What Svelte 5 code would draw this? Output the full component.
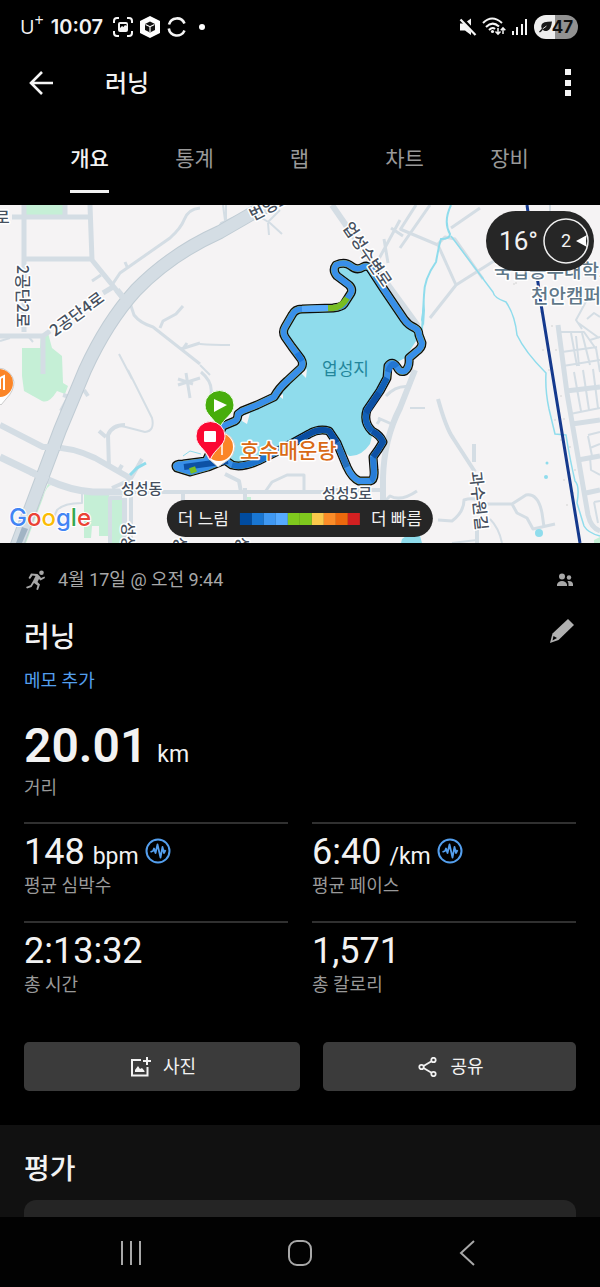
<script>
  const tabs = ['개요', '통계', '랩', '차트', '장비'];
  let active = $state('개요');

  const stats = [
    { value: '148', unit: 'bpm', label: '평균 심박수', chart: true },
    { value: '6:40', unit: '/km', label: '평균 페이스', chart: true },
    { value: '2:13:32', label: '총 시간' },
    { value: '1,571', label: '총 칼로리' }
  ];

  const scale = ['#004b9f', '#1976d2', '#3f98f2', '#55aaff', '#7fc91e', '#7fc91e', '#fbc94b', '#fb8c28', '#ed690d', '#d32021'];

  const route =
    'M177 468 C174 465 178 464 183 464 L206 461 L223 426 L235 421 Q238 419 238 414 L242 411 L257 405 L274 397 Q279 388 287 381 L301 368 Q304 364 301 359 L292 347 L285 337 Q282 332 285 327 L292 315 Q295 309 302 309 L333 308 Q342 307 344 304 L351 293 Q353 289 349 285 L337 276 Q332 270 336 265 Q345 261 351 266 Q357 271 363 267 Q367 265 370 268 L383 288 L404 319 Q408 325 415 328 Q419 330 419 335 L422 343 Q422 348 416 352 L409 358 Q410 367 405 371 Q400 373 397 367 Q392 360 388 366 L387 378 L380 391 L367 410 Q363 422 372 431 Q380 435 383 442 Q379 449 373 457 L374 470 Q375 480 370 481 L359 481 Q352 478 347 467 L337 443 L329 431 Q319 428 309 434 L280 450 L258 461 Q242 468 232 465 L225 460 L208 467 L190 472 Z';

  const segments = [
    { color: '#0d51a5', d: 'M184 467 L206 464 L228 461' },
    { color: '#1b72cd', d: 'M232 465 Q242 468 258 461 L280 450' },
    { color: '#0a4ea2', d: 'M280 450 L309 434 Q319 428 329 431 L337 443' },
    { color: '#246fbe', d: 'M337 443 L347 467' },
    { color: '#277cd6', d: 'M371 481 Q375 478 373 457' },
    { color: '#0d51a5', d: 'M373 457 Q379 449 383 442 Q380 435 372 431' },
    { color: '#1260b7', d: 'M372 431 Q363 422 367 410 L380 391 L387 378' },
    { color: '#0d51a5', d: 'M366 413 L379 393' },
    { color: '#2276d1', d: 'M388 372 Q392 360 397 367' },
    { color: '#1d78dc', d: 'M297 353 L302 361' },
    { color: '#78bd22', d: 'M328 308 L333 308 Q342 307 347 298' },
    { color: '#58aafb', d: 'M302 309 L328 308' },
    { color: '#78bd22', d: 'M190 471 L196 469' }
  ];

  // Minor streets, grouped by stroke width
  const streets = [
    { w: 5, d: 'M24 205 V332 M90 205 L92 260 L122 297 M12 217 H90 M24 259 H92 M65 205 V215 M43 337 V374 M0 336 H43 L50 331 M103 293 L113 287' },
    { w: 3, d: 'M112 285 L120 273 L170 238 Q181 228 184 220 Q188 209 200 208 M130 303 L134 315 Q140 323 153 327 L200 364 M160 328 L163 321 L176 314 L183 306 M182 350 L187 343 M181 349 L200 343 M128 269 L125 262 M92 281 L101 275' },
    { w: 2, d: 'M119 354 L132 379 M109 325 L116 323 M28 336 L33 342 M0 341 L10 338 M128 370 L152 418 Q155 431 145 432 L118 425 M200 344 Q212 345 230 345 M200 365 L210 375' },
    { w: 6, d: 'M0 425 L43 447 Q71 446 95 458 L130 478' },
    { w: 7, d: 'M0 457 L48 480 Q72 491 93 492 L125 492' },
    { w: 4, d: 'M109 468 L108 435 Q112 425 125 425 M118 472 L122 465 M99 431 L106 437 M112 488 L130 480 L142 459 M78 380 L61 411 M125 498 V543 M110 543 V498 H122 M63 395 L73 398 L81 383 M84 390 L88 396' },
    { w: 2, d: 'M82 491 V503 Q64 503 57 510 L52 522 M109 498 L110 540 M123 498 V540' },
    { w: 4, d: 'M125 492 H340 M131 480 V543 M183 492 V506 M245 488 V504 M225 474 L239 481 L241 492 M335 490 H383' },
    { w: 3, d: 'M178 379 L193 384 M186 373 L190 398 M178 385 L200 378 M201 372 Q213 382 211 394 M265 492 L272 482 L287 475 H304 V492 M235 470 L232 450' },
    { w: 6, d: 'M332 205 L370 260 L418 326 M415 370 L400 408 Q384 439 383 478 V503' },
    { w: 3, d: 'M378 418 L394 425 M386 396 Q397 384 411 387 M377 424 L381 418 M346 503 V531 L380 531 M383 503 L390 496 Q401 502 417 491' },
    { w: 3, d: 'M400 248 L430 205 M400 230 L416 205 M400 229 L438 245 L456 285 L430 318 M438 244 L445 237 L455 239 L483 279 M456 285 L497 259 M451 228 L480 208 M375 266 L400 220 M388 263 L384 239 M391 228 L403 236' },
    { w: 2, d: 'M226 228 L223 205 M250 211 L270 223 L282 234 M268 223 L269 235 M268 222 L280 210 M215 236 L221 223 L251 210 M226 220 L226 205 M210 232 L218 240' },
    { w: 4, d: 'M438 399 Q446 428 453 438 L475 472 M474 444 V462 M477 530 V543' },
    { w: 3, d: 'M438 520 L452 521 Q464 512 464 500 Q475 496 484 504 H512 L526 495 Q538 493 542 513 L544 527 M512 504 L517 513 L527 518 L533 529 L555 524' },
    { w: 2, d: 'M490 519 Q499 528 502 543 M550 205 V226 M410 408 L425 408 M452 543 L477 540' },
    { w: 5, d: 'M558 325 L567 393 L588 515 Q591 528 600 531 M572 424 L600 420 M566 391 L600 387 M578 460 L600 456 M586 493 L600 490' },
    { w: 2, d: 'M559 332 H584 L596 349 M562 352 L597 347 M563 366 L600 360 M571 333 L577 366 M582 333 L590 365 M596 348 L600 372 M576 336 L579 366 M570 414 L600 408 M574 372 L581 411 M583 370 L589 410 M593 369 L598 408 M588 435 L600 432 M588 436 L592 456 M590 448 L600 444 M590 457 L591 470 L600 475 M594 502 L600 501 M594 502 L598 523' },
    { w: 2, d: 'M582 329 L576 320 L582 309 L589 296 M577 322 L599 338 M587 319 L594 313 L600 317 M590 340 L600 337' }
  ];

  const dots = [
    [541, 312], [552, 326], [543, 350], [556, 350], [552, 368], [561, 396], [549, 370],
    [564, 419], [555, 420], [561, 440], [570, 447], [564, 480], [575, 470], [573, 493], [567, 505], [514, 284], [516, 283]
  ];
</script>

{#snippet pulse()}
  <svg class="pulse" viewBox="0 0 26 26" fill="none" stroke="#549fee" aria-hidden="true">
    <circle cx="13" cy="13" r="11.5" stroke-width="2" />
    <path d="M5.500 14 L8 13 L9 10.500 L10.500 15 L12.500 6.500 L15.500 19.500 L17.500 9 L19 15 L20.500 12" stroke-width="1.8" stroke-linejoin="round" />
  </svg>
{/snippet}

<div class="screen">
  <div class="status">
    <div class="status-side">
      <span class="carrier">U<sup>+</sup></span>
      <span class="clock">10:07</span>
      <svg class="s20" viewBox="0 0 20 20" fill="none" stroke="#f5f5f5" stroke-width="2" aria-hidden="true">
        <path d="M1 6 V4 Q1 1 4 1 H6 M14 1 H16 Q19 1 19 4 V6 M19 14 V16 Q19 19 16 19 H14 M6 19 H4 Q1 19 1 16 V14" />
        <path fill="#f5f5f5" stroke="none" fill-rule="evenodd" d="M7 5 H13 Q15 5 15 7 V13 Q15 15 13 15 H7 Q5 15 5 13 V7 Q5 5 7 5 Z M7 11 L9 9 L10.500 10 L12 8 L13.500 9 V7 H7 Z" />
      </svg>
      <svg class="cube" viewBox="0 0 20 22" aria-hidden="true">
        <path fill="#fff" d="M10 0 L20 5 V17 L10 22 L0 17 V5 Z" />
        <path d="M5 8 L10 5.500 L15 8 V14 L10 16.500 L5 14 Z" fill="#111" />
        <path d="M5.500 8.500 L10 10.700 L14.500 8.500 M10 10.500 V16" fill="none" stroke="#fff" stroke-width="1.2" />
      </svg>
      <svg class="s20" viewBox="0 0 20 20" fill="none" stroke="#f5f5f5" stroke-width="2.6" aria-hidden="true">
        <path d="M2 7.500 A8.200 8.200 0 0 1 17.500 6.500 M1.800 11.500 A8.200 8.200 0 0 0 17.500 13.500" />
      </svg>
      <span class="dot"></span>
    </div>
    <div class="status-side right">
      <svg class="s18" viewBox="0 0 18 18" aria-hidden="true">
        <path fill="#f5f5f5" d="M1 5.500 H5 L12 .5 V17 L6 12.500 H1 Z" />
        <path d="M1 -1 L18 17" stroke="#000" stroke-width="4" />
        <path d="M1.500 1.500 L16.500 17" stroke="#f5f5f5" stroke-width="2.200" />
      </svg>
      <svg class="wifi" viewBox="0 0 24 20" fill="none" stroke="#f5f5f5" stroke-width="2" aria-hidden="true">
        <path d="M1 6 Q10 -3 20 6 M4 10 Q10.500 3.500 17 9.500 M7 13 Q10.500 9.500 13 12" />
        <circle cx="10.500" cy="14.500" r="1.600" fill="#f5f5f5" stroke="none" />
        <path d="M16 11 V17 M13.500 14.500 L16 17.200 L18.500 14.500 M21 17 V11 M18.800 13.300 L21 10.800 L23.300 13.300" stroke-width="1.500" />
      </svg>
      <svg class="s18" viewBox="0 0 18 18" fill="#f5f5f5" aria-hidden="true">
        <path d="M1 13 h2 v4 h-2 z M5 9 h2 v8 h-2 z M10 6 h2 v11 h-2 z M14 1 h2 v16 h-2 z" />
      </svg>
      <span class="battery">
        <svg viewBox="0 0 14 12" aria-hidden="true">
          <path d="M0 11 Q2 9 3 8 Q1 3 6 1 Q9 0 14 0 Q13 9 9 10 Q6 11 4 9 Q3 11 1 12 Z" fill="#181818" />
          <path d="M4 8 L8 5" stroke="#e8e8e8" stroke-width="1" />
        </svg>47
      </span>
    </div>
  </div>

  <header>
    <button class="icon" aria-label="뒤로">
      <svg viewBox="0 0 26 26" fill="none" stroke="#f5f5f5" stroke-width="2.600" aria-hidden="true">
        <path d="M25 13 H3 M14 2 L3 13 L14 24" />
      </svg>
    </button>
    <h1>러닝</h1>
    <button class="icon more" aria-label="더보기">
      <svg viewBox="0 0 26 28" fill="#f5f5f5" aria-hidden="true">
        <path d="M10 0 h6 v6 h-6 z M10 11 h6 v6 h-6 z M10 21 h6 v6 h-6 z" />
      </svg>
    </button>
  </header>

  <nav class="tabs">
    {#each tabs as tab}
      <button class:active={active === tab} onclick={() => (active = tab)}><span>{tab}</span></button>
    {/each}
  </nav>

  <main>
    <section class="map">
      <svg class="canvas" viewBox="0 205 600 338" preserveAspectRatio="xMidYMid slice" role="img" aria-label="경로 지도">
        <rect y="205" width="600" height="338" fill="#f5f3f4" />
        <g fill="#c5efd6">
          <path d="M26 205 H63 V215 H26 Z" />
          <path d="M41 334 L48 333 L52 348 L62 356 L63 383 L68 386 L65 394 L57 391 Q49 404 42 401 L24 391 L22 376 V348 H40 Z" />
          <path d="M84 494 H109 V536 H99 V526 H92 L91 538 H84 Z M111 498 H124 V543 H109 Z" />
          <path d="M48 484 L84 494 L82 491 L54 485 Q47 483 43 498 L26 543 H22 Z" />
          <path d="M246 497 h5 v8 h-5 z M594 540 L600 537 V543 H594 Z" />
        </g>
        <g fill="none" stroke="#d4dde4" stroke-linejoin="round">
          {#each streets as s}
            <path d={s.d} stroke-width={s.w} />
          {/each}
          <path d="M283 198 L253 213 L220 232 Q171 254 136 290 Q107 322 85 370 L60 430 L15 550" stroke="#c0ccd4" stroke-width="14" />
          <path d="M283 198 L253 213 L220 232 Q171 254 136 290 Q107 322 85 370 L60 430 L15 550" stroke="#d4dde4" stroke-width="12" />
          <path d="M30 472 L48 480 M43 447 L60 447 M117 290 L126 301" stroke-width="6" />
        </g>
        <path d="M22 527 L28 529 L22 543 H16 Z" fill="#a1b4c4" />
        <g fill="none" stroke="#8fdcec">
          <path d="M451 205 Q443 222 450 234 Q450 239 441 239 Q439 245 436 262 Q424 279 424 295 L422 330" stroke-width="2" />
          <path d="M451 236 L493 292 Q494 298 506 302 Q515 315 517 335 Q525 352 546 373 Q545 390 549 409 L555 434 L566 435 Q570 460 575 481 Q580 486 577 503 L584 526 Q588 533 600 536" stroke-width="1.500" />
          <path d="M130 475 L137 468 L146 463" stroke-width="3" />
          <path d="M183 456 L190 451 L201 454" stroke-width="1" />
        </g>
        <g fill="#8fdcec">
          <path d="M424 300 L421 320 L424 326 L425 310 Z" />
          <circle cx="546" cy="477" r="2" /><circle cx="547" cy="463" r="1.500" />
          <ellipse cx="539" cy="533" rx="4" ry="4" />
          <path d="M402 539 L406 536 H420 L422 543 H401 Z" />
          <path d="M222 431 L238 421 L243 412 L274 398 L303 367 L284 332 L297 309 H340 L352 290 L335 270 L348 266 L370 268 L420 335 L405 358 L390 366 L380 391 L366 410 L366 423 L373 432 L370 444 Q361 457 349 456 L340 447 L329 431 L315 431 L280 450 L240 466 L230 460 Z" />
        </g>
        <path d="M302 372 L307 369 L306 378 L302 374 Z M279 396 L283 394 L283 399 Z M242 416 L250 413 L247 424 L242 421 Z M404 360 L398 366 L404 369 Z" fill="#f5f3f4" />
        <g fill="#dedede">
          {#each dots as [x, y]}
            <circle cx={x} cy={y} r="1" />
          {/each}
        </g>
        <path d="M527 205 L541 304 L580 543" fill="none" stroke="#15398d" stroke-width="3" />

        <g fill="none" stroke-linejoin="round" stroke-linecap="round">
          <path d={route} stroke="#0c0c0c" stroke-width="9" />
          <path d={route} stroke="#a2b043" stroke-width="6.500" />
          <path d={route} stroke="#388fe9" stroke-width="6" />
          {#each segments as seg}
            <path d={seg.d} stroke={seg.color} stroke-width="6" stroke-linecap="butt" />
          {/each}
        </g>

        <g class="names">
          <text x="253" y="221" transform="rotate(-27 253 221)">번영로</text>
          <text x="-5" y="223">로</text>
          <text x="17" y="265" transform="rotate(90 17 265)">2공단2로</text>
          <text x="55" y="337" transform="rotate(-36 55 337)">2공단4로</text>
          <text x="342" y="227" transform="rotate(56 342 227)">업성수변로</text>
          <text x="121" y="494" class="small">성성동</text>
          <text x="322" y="499" class="small">성성5로</text>
          <text x="470" y="472" transform="rotate(84 470 472)">과수원길</text>
          <text x="123" y="522" transform="rotate(90 123 522)" class="small">성성로</text>
          <text x="175" y="537" transform="rotate(90 175 537)" class="small">성성로</text>
          <text x="237" y="537" transform="rotate(90 237 537)" class="small">성성로</text>
          <text x="494" y="278" class="school">국립공주대학교</text>
          <text x="531" y="303" class="school">천안캠퍼스</text>
          <text x="322" y="375" class="lake">업성지</text>
        </g>

        <g>
          <path d="M-2 368 A16 16 0 0 1 14 382 Q14 391 6 399 L1 405 L-6 398 Z" fill="#fff" stroke="#ccc" stroke-width="1" />
          <circle cx="-1" cy="383" r="14" fill="#fb8527" />
          <path d="M0 389 V378 L4 376 V390" fill="none" stroke="#fff" stroke-width="2" />
          <path d="M218 467 L209 459 Q202 449 205 440 Q211 430 222 432 Q233 435 235 446 Q234 456 228 460 Z" fill="#fff" stroke="#d0d0d0" stroke-width="1" />
          <circle cx="219" cy="447" r="14" fill="#fb8527" />
          <path d="M222 440 V455" stroke="#fff" stroke-width="1.500" />
          <path d="M219 429 C214 417 205 415 205 405 A14.500 14.500 0 0 1 234 405 C234 415 224 417 219 429 Z" fill="#47ad0b" stroke="#f4fff0" stroke-width="1" />
          <path d="M214 399 L227 405 L214 412 Z" fill="#fff" />
          <path d="M210 460 C205 448 196 446 196 436 A14.500 14.500 0 0 1 225 436 C225 446 215 448 210 460 Z" fill="#fb0932" stroke="#fff0f2" stroke-width="1" />
          <rect x="204" y="431" width="12" height="11" rx="1" fill="#fff" />
        </g>
        <g class="names"><text x="240" y="458" class="food">호수매운탕</text></g>
        <text class="google" x="9" y="526"><tspan fill="#4285f4">G</tspan><tspan fill="#ea4335">o</tspan><tspan fill="#fbbc05">o</tspan><tspan fill="#4285f4">g</tspan><tspan fill="#34a853">l</tspan><tspan fill="#ea4335">e</tspan></text>
      </svg>

      <div class="weather">
        <span>16°</span>
        <svg viewBox="0 0 48 48" aria-hidden="true">
          <circle cx="24" cy="24" r="22" fill="none" stroke="#f0f0f0" stroke-width="1.500" />
          <path d="M34 24 L45 18 Q43 24 45 30 Z" fill="#fff" />
          <text x="24" y="30" text-anchor="middle">2</text>
        </svg>
      </div>

      <div class="legend">
        <span>더 느림</span>
        <div class="scale">
          {#each scale as color}<i style:background={color}></i>{/each}
        </div>
        <span>더 빠름</span>
      </div>
    </section>

    <section class="summary">
      <div class="when">
        <svg viewBox="0 0 20 20" fill="#a8a8a8" aria-hidden="true">
          <circle cx="15.500" cy="2.700" r="2.300" />
          <path d="M5 3.500 L11.500 4 L14 6.500 L15 8 L18.500 6.500 L19 8 L14.500 10.500 L13 9 L11.500 12 L14 14.500 L12 20 L10.300 19.500 L11.500 15.500 L8 13 L5.500 17 L1 18.500 L0 17 L4.500 15.300 L7 11 L9.500 6 L6.500 5.500 L4 9 L2.500 8 Z" />
        </svg>
        <span>4월 17일 @ 오전 9:44</span>
        <svg class="people" viewBox="0 0 18 14" fill="#a8a8a8" aria-hidden="true">
          <circle cx="6" cy="3.500" r="3" /><circle cx="13" cy="4.500" r="2.200" />
          <path d="M1 13 V11.500 Q2 8 6 8 Q10 8 11 11.500 V13 Z M11.500 8 Q16.500 7.500 17 11 V13 H12.500 V11 Q12.500 9.500 11.500 8 Z" />
        </svg>
      </div>

      <div class="title">
        <h2>러닝</h2>
        <button class="edit" aria-label="편집">
          <svg viewBox="0 0 26 26" aria-hidden="true">
            <path d="M19 1 L25 7 L9.500 22 L1 25 L3.500 15.500 Z" fill="#b0b0b0" />
            <path d="M4.500 18 L8 20 L3.500 22.500 Z" fill="#000" />
          </svg>
        </button>
      </div>
      <a class="memo" href="#memo">메모 추가</a>

      <div class="distance">
        <div class="value"><strong>20.01</strong><span>km</span></div>
        <p>거리</p>
      </div>

      <div class="stats">
        {#each stats as stat}
          <div class="stat">
            <div class="value">
              <b>{stat.value}</b>
              {#if stat.unit}<span>{stat.unit}</span>{/if}
              {#if stat.chart}{@render pulse()}{/if}
            </div>
            <p>{stat.label}</p>
          </div>
        {/each}
      </div>

      <div class="actions">
        <button>
          <svg viewBox="0 0 20 20" fill="none" stroke="#f2f2f2" stroke-width="2" aria-hidden="true">
            <path d="M10 3 H1 V18.500 H16.500 V10 M16 0 V8 M12 4 H20" />
            <path d="M4 15 V13 L7 9 L9 12 L11 11 L13.500 14 V15 Z" fill="#f2f2f2" stroke="none" />
          </svg>
          사진
        </button>
        <button>
          <svg viewBox="0 0 20 20" fill="none" stroke="#f2f2f2" stroke-width="1.800" aria-hidden="true">
            <circle cx="3.500" cy="10" r="2.200" /><circle cx="15.500" cy="3" r="2.200" /><circle cx="15.500" cy="17" r="2.200" />
            <path d="M5.500 9 L13.500 4.200 M5.500 11 L13.500 15.800" />
          </svg>
          공유
        </button>
      </div>
    </section>

    <section class="rating">
      <h2>평가</h2>
      <div class="card"></div>
    </section>
  </main>

  <nav class="system">
    <button aria-label="최근 앱">
      <svg viewBox="0 0 28 28" fill="none" stroke="#a8a8a8" stroke-width="2" aria-hidden="true"><path d="M5 2 V26 M14 2 V26 M23 2 V26" /></svg>
    </button>
    <button aria-label="홈">
      <svg viewBox="0 0 28 28" fill="none" stroke="#a8a8a8" stroke-width="2" aria-hidden="true"><rect x="3" y="2" width="22" height="24" rx="8" /></svg>
    </button>
    <button aria-label="이전">
      <svg viewBox="0 0 28 28" fill="none" stroke="#a8a8a8" stroke-width="2" aria-hidden="true"><path d="M20 2 L7 14 L20 26" /></svg>
    </button>
  </nav>
</div>

<style>
  :global(body) { margin: 0; background: #000; }
  .screen {
    display: flex;
    flex-direction: column;
    height: 100vh;
    background: #000;
    color: #f2f2f2;
    font-family: Roboto, 'Noto Sans CJK KR', sans-serif;
  }
  button { font: inherit; color: inherit; background: none; border: 0; padding: 0; cursor: pointer; }
  svg { display: block; flex: none; }
  h1, h2, p { margin: 0; }

  .status { display: flex; justify-content: space-between; align-items: center; height: 54px; padding: 0 22px 0 20px; flex: none; }
  .status-side { display: flex; align-items: center; gap: 7px; }
  .status-side.right { gap: 5px; }
  .carrier { font: 20px/24px 'Open Sans', sans-serif; }
  .carrier sup { font-size: 16px; line-height: 0; }
  .clock { font: 600 20px/24px Inter, sans-serif; margin-right: 3px; }
  .s20 { width: 20px; height: 20px; }
  .s18 { width: 18px; height: 18px; }
  .cube { width: 20px; height: 22px; }
  .wifi { width: 24px; height: 20px; }
  .dot { width: 6px; height: 6px; border-radius: 50%; background: #fff; margin-left: 5px; }
  .battery {
    display: flex; align-items: center; justify-content: center;
    width: 44px; height: 24px; border-radius: 12px;
    background: linear-gradient(90deg, #eee 47%, #919191 47%);
    color: #101010; font: 700 17px/24px Inter, sans-serif;
  }
  .battery svg { width: 13px; height: 12px; }

  header { display: flex; align-items: center; height: 58px; padding: 0 19px 0 28px; flex: none; }
  h1 { flex: 1; margin-left: 51px; padding-top: 2px; font-size: 24px; line-height: 32px; font-weight: 500; }
  .icon svg { width: 26px; height: 28px; }

  .tabs { display: flex; height: 93px; padding: 0 38px 0 37px; flex: none; }
  .tabs button { flex: 1; display: flex; justify-content: center; align-items: flex-end; padding-bottom: 12px; font-size: 21px; line-height: 32px; color: #999; }
  .tabs span { padding-bottom: 15px; border-bottom: 3px solid transparent; }
  .tabs .active { color: #f2f2f2; font-weight: 500; }
  .tabs .active span { border-color: #f2f2f2; }

  main { flex: 1; min-height: 0; overflow: hidden auto; scrollbar-width: none; }
  .map { position: relative; height: 338px; }
  .canvas { width: 100%; height: 100%; }
  .names text {
    font: 500 16px 'Noto Sans CJK KR', sans-serif;
    fill: #46505e; stroke: #fff; stroke-width: 3px; stroke-linejoin: round; paint-order: stroke;
  }
  .names .small { font-size: 15px; }
  .names .school { font-size: 19px; fill: #607889; }
  .names .lake { font-size: 17px; font-weight: 400; fill: #23869b; stroke: none; }
  .names .food { font-size: 21px; fill: #d96a16; }
  .google { font: 500 24px Inter, sans-serif; stroke: #fff; stroke-width: 2px; paint-order: stroke; }
  .weather {
    position: absolute; top: 6px; right: 6px;
    display: flex; align-items: center; gap: 4px;
    height: 60px; padding: 0 4px 0 13px; border-radius: 30px; background: #262626;
    font-size: 26px;
  }
  .weather svg { width: 48px; height: 48px; }
  .weather text { fill: #f2f2f2; font-size: 18px; }
  .legend {
    position: absolute; bottom: 6px; left: 50%; transform: translateX(-50%);
    display: flex; align-items: center; gap: 11px;
    height: 37px; padding: 0 11px; border-radius: 19px; background: #262626;
    font-size: 17px; line-height: 24px; white-space: nowrap;
  }
  .scale { display: flex; }
  .scale i { width: 12px; height: 12px; }

  .summary { padding: 25px 24px 34px; }
  .when { display: flex; align-items: center; gap: 12px; height: 24px; font-size: 18px; line-height: 24px; color: #a8a8a8; padding-left: 2px; }
  .when svg { width: 20px; height: 20px; }
  .when .people { width: 18px; height: 14px; margin: 0 2px 0 auto; }
  .title { display: flex; justify-content: space-between; align-items: center; margin-top: 24px; }
  h2 { font-size: 28px; line-height: 40px; font-weight: 500; }
  .title h2 { padding-top: 2px; }
  .edit svg { width: 26px; height: 26px; }
  .edit { padding: 0 1px 12px 0; }
  .memo { display: inline-block; margin-top: 11px; font-size: 18px; line-height: 24px; color: #549fee; text-decoration: none; }

  .distance { margin-top: 27px; }
  .value { display: flex; align-items: baseline; }
  .distance strong { font-size: 48px; line-height: 52px; font-weight: 600; }
  .value span { font-size: 23px; line-height: 28px; margin-left: 8px; }
  .distance .value span { margin-left: 10px; }
  p { font-size: 18px; line-height: 24px; color: #999; }
  .distance p { margin-top: 4px; }

  .stats { display: grid; grid-template-columns: 1fr 1fr; column-gap: 24px; margin-top: 22px; }
  .stat { height: 97px; border-top: 2px solid #303030; }
  .stat .value { height: 50px; }
  .stat b { font-weight: 400; font-size: 36px; line-height: 56px; }
  .pulse { width: 26px; height: 26px; align-self: center; margin: 4px 0 0 6px; }

  .actions { display: grid; grid-template-columns: 276fr 253fr; gap: 23px; margin-top: 22px; }
  .actions button { display: flex; align-items: center; justify-content: center; gap: 12px; height: 49px; padding: 1px 0 0 3px; border-radius: 5px; background: #3b3b3b; font-size: 18px; line-height: 24px; }
  .actions svg { width: 20px; height: 20px; }

  .rating { padding: 25px 24px; background: #111; }
  .card { height: 120px; margin-top: 10px; border-radius: 12px; background: #252525; }

  .system { display: flex; align-items: center; justify-content: space-between; height: 70px; padding: 1px 118px 0 117px; box-sizing: border-box; flex: none; background: #020202; }
  .system svg { width: 28px; height: 28px; }
</style>
